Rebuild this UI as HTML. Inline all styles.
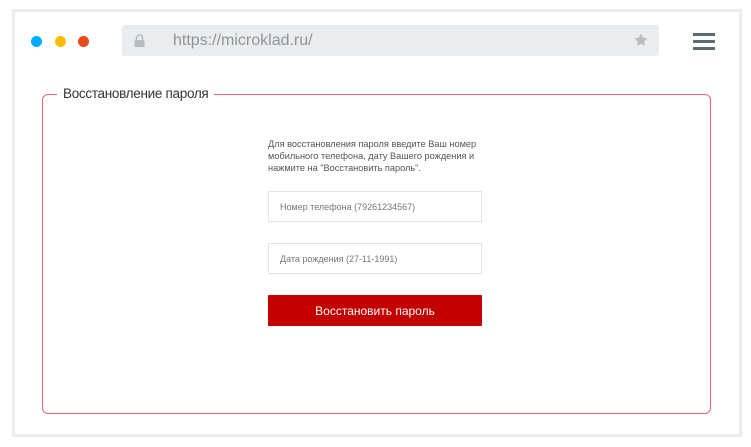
<!DOCTYPE html>
<html><head><meta charset="utf-8"><style>
*{margin:0;padding:0;box-sizing:border-box}
body{width:751px;height:447px;background:#fff;position:relative;font-family:"Liberation Sans",sans-serif;overflow:hidden}
.frame{position:absolute;left:12px;top:9px;width:730px;height:428px;border:3px solid #e9edf0}
.dot{position:absolute;top:36px;width:11px;height:11px;border-radius:50%}
.url{position:absolute;left:122px;top:25px;width:537px;height:31px;background:#e9edf0;border-radius:3px}
.url span{position:absolute;left:51px;top:7px;font-size:16px;color:#8b959c}
.ham{position:absolute;left:693px;width:22px;height:3px;background:#5b6b76}
.box{position:absolute;left:42px;top:94px;width:669px;height:320px;border:1.5px solid #e0686a;border-radius:6px}
.title{position:absolute;left:57px;top:86px;background:#fff;padding:0 6px;font-size:13.5px;color:#333;letter-spacing:-0.3px}
.desc{position:absolute;left:268px;top:138px;width:240px;font-size:9.2px;line-height:12px;color:#555}
.inp{position:absolute;left:268px;width:214px;height:31px;border:1px solid #e4e4e4;font-size:9px;color:#777;padding:10px 0 0 11px}
.btn{position:absolute;left:268px;top:295px;width:214px;height:31px;background:#c30000;color:#fff;font-size:12px;text-align:center;line-height:33px;border-radius:1px}
</style></head><body>
<div class="frame"></div>
<div class="dot" style="left:31px;background:#00aaff"></div>
<div class="dot" style="left:55px;background:#ffbb00"></div>
<div class="dot" style="left:78px;background:#e8491d"></div>
<div class="url">
<svg style="position:absolute;left:12px;top:9px" width="11" height="13" viewBox="0 0 11 13"><path d="M2.5 6V4a3 3 0 0 1 6 0v2" fill="none" stroke="#b5bdc3" stroke-width="1.6"/><rect x="0.5" y="6" width="10" height="7" rx="1" fill="#b5bdc3"/></svg>
<span>https://microklad.ru/</span>
<svg style="position:absolute;left:512px;top:8px" width="14" height="14" viewBox="0 0 24 24"><path d="M12 1l3.4 7 7.6 1-5.5 5.3 1.3 7.7L12 18.4 5.2 22l1.3-7.7L1 9l7.6-1z" fill="#b5bdc3"/></svg>
</div>
<div class="ham" style="top:33px"></div>
<div class="ham" style="top:40px"></div>
<div class="ham" style="top:47px"></div>
<div class="box"></div>
<div class="title">Восстановление пароля</div>
<div class="desc">Для восстановления пароля введите Ваш номер мобильного телефона, дату Вашего рождения и нажмите на "Восстановить пароль".</div>
<div class="inp" style="top:191px">Номер телефона (79261234567)</div>
<div class="inp" style="top:243px">Дата рождения (27-11-1991)</div>
<div class="btn">Восстановить пароль</div>
</body></html>
